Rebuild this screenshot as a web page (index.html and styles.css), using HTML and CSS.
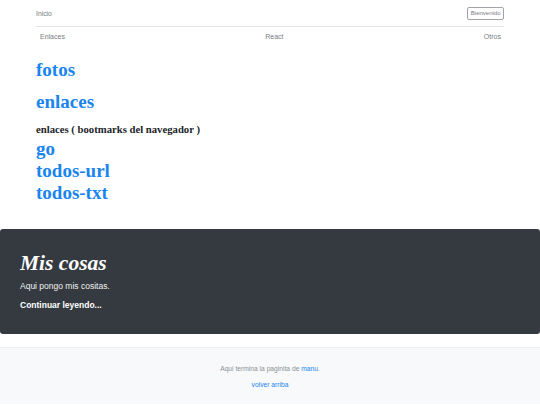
FILE: index.html
```html
<!DOCTYPE html>
<html lang="es">
<head>
<meta charset="utf-8">
<title>Mis cosas</title>
<link rel="stylesheet" href="styles.css">
</head>
<body>
<div class="container">
  <header class="site-header">
    <a class="brand" href="#">Inicio</a>
    <a class="btn-outline" href="#">Bienvenido</a>
  </header>
  <nav class="nav-row">
    <a href="#">Enlaces</a>
    <a href="#">React</a>
    <a href="#">Otros</a>
  </nav>
  <main class="links">
    <a class="big first" href="#">fotos</a>
    <a class="big spaced" href="#">enlaces</a>
    <h4 class="sub">enlaces ( bootmarks del navegador )</h4>
    <a class="big" href="#">go</a>
    <a class="big" href="#">todos-url</a>
    <a class="big" href="#">todos-txt</a>
  </main>
</div>
<section class="jumbo">
  <h1 class="jumbo-title">Mis cosas</h1>
  <p class="jumbo-lead">Aqui pongo mis cositas.</p>
  <a class="jumbo-more" href="#">Continuar leyendo...</a>
</section>
<footer class="site-footer">
  <p class="foot-line">Aqui termina la paginita de <a href="#">manu</a>.</p>
  <p class="foot-line second"><a href="#">volver arriba</a></p>
</footer>
</body>
</html>
```

FILE: styles.css
```css
html, body {
  margin: 0;
  padding: 0;
  background: #fff;
  font-family: "Liberation Sans", Arial, sans-serif;
  color: #212529;
}
a { text-decoration: none; }

.container {
  padding: 0 36px;
}

.site-header {
  height: 26px;
  border-bottom: 1px solid #e5e5e5;
  display: flex;
  align-items: center;
  justify-content: space-between;
}
.brand {
  font-size: 6.8px;
  color: #777b7f;
  margin-top: 1px;
}
.btn-outline {
  font-size: 6px;
  color: #777b7f;
  border: 1px solid #a0a4a8;
  border-radius: 2px;
  height: 11px;
  line-height: 11px;
  padding: 0 2.5px;
  margin-top: 1px;
}

.nav-row {
  height: 19px;
  display: flex;
  align-items: center;
  justify-content: space-between;
  padding: 0 3px 0 4px;
}
.nav-row a {
  font-size: 7px;
  color: #777b7f;
}

.links {
  display: flex;
  flex-direction: column;
  align-items: flex-start;
  padding-top: 13px;
  padding-bottom: 25px;
}
.big {
  font-family: "Liberation Serif", "Times New Roman", serif;
  font-weight: 700;
  font-size: 19px;
  line-height: 22px;
  color: #1a85f0;
}
.big.spaced { margin-top: 10px; }
.sub {
  margin: 10px 0 2px;
  font-family: "Liberation Serif", "Times New Roman", serif;
  font-weight: 700;
  font-size: 10.7px;
  line-height: 13px;
  color: #212529;
}

.jumbo {
  background: #343a40;
  border-radius: 3px;
  padding: 22px 20px 22px;
  color: #fff;
}
.jumbo-title {
  margin: 0;
  font-family: "Liberation Serif", "Times New Roman", serif;
  font-style: italic;
  font-weight: 700;
  font-size: 21.5px;
  line-height: 25px;
}
.jumbo-lead {
  margin: 4px 0 0;
  font-size: 8.5px;
  line-height: 12.5px;
  color: #f1f1f1;
}
.jumbo-more {
  display: block;
  margin-top: 6.5px;
  font-size: 8.5px;
  line-height: 12.5px;
  font-weight: 700;
  color: #fff;
}

.site-footer {
  margin-top: 13px;
  background: #f8f9fa;
  border-top: 1px solid #eeeeee;
  padding: 16px 0 14px;
  text-align: center;
}
.foot-line {
  margin: 0;
  font-size: 6.7px;
  line-height: 10px;
  color: #8a9097;
}
.foot-line.second { margin-top: 6px; }
.foot-line a { color: #1a85f0; }
```
